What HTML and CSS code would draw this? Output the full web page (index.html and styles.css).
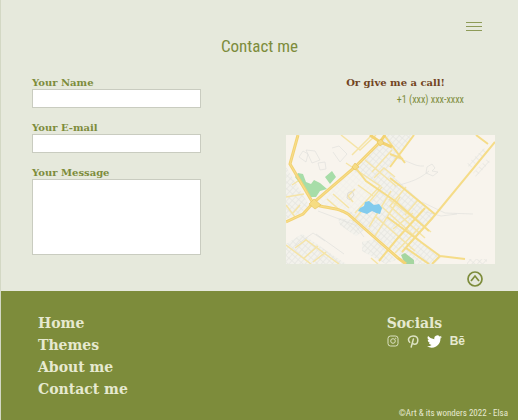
FILE: index.html
```html
<!DOCTYPE html>
<html lang="en">
<head>
<meta charset="utf-8">
<meta name="viewport" content="width=device-width, initial-scale=1">
<title>Contact me</title>
<link rel="stylesheet" href="styles.css">
</head>
<body>
<header class="top">
  <button class="menu" type="button" aria-label="Menu">
    <svg width="16" height="10" viewBox="0 0 16 10"><path d="M0 .5h16M0 4.5h16M0 8.5h16"/></svg>
  </button>
  <h1>Contact me</h1>
</header>
<main>
  <div class="columns">
    <form class="form">
      <div class="field"><label for="name">Your Name</label><input id="name" type="text"></div>
      <div class="field"><label for="email">Your E-mail</label><input id="email" type="email"></div>
      <div class="field"><label for="message">Your Message</label><textarea id="message"></textarea></div>
    </form>
    <section class="call">
      <h2>Or give me a call!</h2>
      <p class="phone">+1 (xxx) xxx-xxxx</p>
      <svg class="map" viewBox="0 0 209 129" role="img" aria-label="Map">
        <defs>
          <pattern id="blocks" width="5" height="4" patternUnits="userSpaceOnUse" patternTransform="rotate(-48)">
            <path d="M0 .5H5M.5 0V4" stroke="#e3e3de" stroke-width=".6"/>
          </pattern>
        </defs>
        <rect width="209" height="129" fill="#f8f4ed"/>
        <g fill="#f3f2ec">
          <path d="M0 32 23 70 15 78 0 84ZM69 32 94 7 101 0H128L100 35 121 54 150 80 114 121 80 93 58 77 34 70 32 66Z"/>
          <path d="M0 109 16 99 60 129H0ZM76 107 89 104 110 125 100 129 76 116ZM52 83 67 85 78 95 70 101 54 90ZM117 108 130 104 156 121 148 129H115Z"/>
        </g>
        <g fill="url(#blocks)">
          <path d="M0 32 23 70 15 78 0 84ZM69 32 94 7 101 0H128L100 35 121 54 150 80 114 121 80 93 58 77 34 70 32 66Z"/>
          <path d="M0 109 16 99 60 129H0ZM76 107 89 104 110 125 100 129 76 116ZM52 83 67 85 78 95 70 101 54 90ZM117 108 130 104 156 121 148 129H115ZM181 29 198 13 201 17 184 34ZM187 38 202 23 204 27 190 42ZM181 124H201V129H181Z"/>
        </g>
        <path d="M29 65 65 35 94 51 75 79 57 75 35 69Z" fill="#f8f4ed" opacity=".65"/>
        <g fill="none" stroke="#dddeda" stroke-width=".6">
          <path d="m13 22 4-6 5 3-2 8zM20 15l9 1 5 9-8 3zM32 28l7-1 1 7-6 1zM47 17l7 10 7-8-8-8-7 2"/>
          <path d="M108 23C123 25 128 32 138 31M143 36C130 47 121 47 108 52M141 32l5-3 3 4-3 3 6 1-5 4-7-3zM136 67l23 11 28 1M140 77l15 4 16-2M9 111l18-13 12 8M30 99l28 20M32 76l37 14 9 12"/>
        </g>
        <g fill="none" stroke="#f5e4a7" stroke-width="1.5">
          <path d="M55 0 74 15 90 0M66 20 86 0M60 28 94 51 69 78M47 59 63 73M41 64 56 77M79 25 110 51M86 37 106 15M72 50 87 61M69 54 62 61 67 67M96 52 67 86M105 56 83 92M114 62 89 101M120 52 104 71 139 103M103 64 145 97M95 71 134 106M90 82 129 116M107 94 127 78M123 109 147 83M109 118 133 93M132 65 119 80M6 50 15 44M0 62 18 59M7 78 14 70M0 70 9 82M0 110 25 129M9 113 20 105 53 129M18 123 32 111M27 127 40 117M85 123 92 129M88 43 98 33 109 42"/>
        </g>
        <g fill="none" stroke="#f5dc88" stroke-width="2">
          <path d="M128 0 104 32M104 19 117 24M98 0 119 28M190 0 202 9M104 43 117 53 150 80M209 7 149 80 116 117M69 32 80 46 109 66 143 96M101 82 154 121 179 124M154 121 146 129M93 126 111 104 139 73M120 113 143 129"/>
        </g>
        <path d="m9 42 3-4 5 1 3 8 5 2 3-4 6 3 7 6-7 2-4 6H24ZM39 42l7-6 4 6-6 7z" fill="#a7dda8"/>
        <path d="m72 76 2-3 4-2 1-4 4-1 5 4 5-1 3 4-2 6-4-1-4-2-5 3z" fill="#82cbed"/>
        <path d="m115 120 4-2 9 7v4h-9z" fill="#a5d6a0"/>
        <g fill="none" stroke="#f3d373" stroke-width="3">
          <path d="M12 0 4 29 27 68 34 71C49 74 54 74 62 79L79 94 112 123 120 129M0 87 17 79 27 68 69 32 94 7 99 0M84 0 94 7 106 12"/>
        </g>
        <path d="M12 0 4 29 27 68 34 71C49 74 54 74 62 79L79 94 112 123M0 87 17 79 27 68 69 32 94 7" fill="none" stroke="#f9e29a" stroke-width=".7"/>
        <path d="m23 69 5-5 7 6-6 4zM66 32l3-4 4 4-4 3zM91 7l4-3 3 4-4 3z" fill="#f6dc82" stroke="#e8c565" stroke-width=".7"/>
        <path d="m61 63 1-5 4-2 2 4-4 5z" fill="none" stroke="#dedbd1"/>
      </svg>
    </section>
  </div>
  <a class="to-top" href="#" aria-label="Back to top">
    <svg width="16" height="16" viewBox="0 0 16 16"><circle cx="8" cy="8" r="7"/><path d="m4 10 4-5 4 5"/></svg>
  </a>
</main>
<footer>
  <div class="footer-row">
    <nav>
      <a href="#">Home</a>
      <a href="#">Themes</a>
      <a href="#">About me</a>
      <a href="#">Contact me</a>
    </nav>
    <section class="socials">
      <h2>Socials</h2>
      <div class="icons">
        <a href="#" aria-label="Instagram"><svg width="12" height="12" viewBox="0 0 12 12" fill="none" stroke="#dce2c2"><rect x="1" y="1" width="10" height="10" rx="2.5"/><circle cx="6" cy="6" r="2.3"/><circle cx="8.8" cy="3.2" r=".3"/></svg></a>
        <a href="#" aria-label="Pinterest"><svg width="12" height="13" viewBox="0 0 12 13" fill="none" stroke="#dce2c2" stroke-width="1.5" stroke-linecap="round"><path d="M2.7 7.2C.2 4.8 2 1 6 1c3 0 4.8 1.8 4.8 4 0 2.6-1.5 4.3-3.3 4.3-1.2 0-1.8-.6-2-1.2M6.4 4 4.2 12"/></svg></a>
        <a href="#" aria-label="Twitter"><svg width="15" height="13" viewBox="0 2 24 20" fill="#fff"><path d="M24 4.6a10 10 0 0 1-2.8.8 5 5 0 0 0 2.1-2.7 10 10 0 0 1-3.1 1.2 4.9 4.9 0 0 0-8.4 4.5A14 14 0 0 1 1.7 3.2a4.9 4.9 0 0 0 1.5 6.5 5 5 0 0 1-2.2-.6 4.9 4.9 0 0 0 4 4.9 5 5 0 0 1-2.3.1 4.9 4.9 0 0 0 4.6 3.4A10 10 0 0 1 0 19.5 14 14 0 0 0 21.5 7.1 10 10 0 0 0 24 4.6z"/></svg></a>
        <a class="behance" href="#" aria-label="Behance">Bē</a>
      </div>
    </section>
  </div>
  <p class="copyright">©Art &amp; its wonders 2022 - Elsa</p>
</footer>
</body>
</html>
```
FILE: styles.css
```css
* {
  box-sizing: border-box;
}

body {
  margin: 0;
  min-height: 100vh;
  display: flex;
  flex-direction: column;
  border-left: 1px solid #d3d8c4;
  background: #e6e9dc;
  color: #7d8c3b;
  font-family: "DejaVu Serif", serif;
}

h1, h2, p {
  margin: 0;
}

a {
  color: inherit;
  text-decoration: none;
}

svg {
  display: block;
}

.top {
  display: flex;
  flex-direction: column;
  padding: 22px 36px 0;
}

.menu {
  align-self: flex-end;
  padding: 0;
  border: 0;
  background: none;
}

.menu path {
  stroke: #8e9b58;
}

h1 {
  font: 17px/28px "Roboto Condensed", Roboto, sans-serif;
  text-align: center;
}

main {
  display: flex;
  flex-direction: column;
  padding: 17px 23px 4px 31px;
}

.columns {
  display: grid;
  grid-template-columns: 169fr 209fr;
  gap: 85px;
}

.form {
  display: flex;
  flex-direction: column;
  gap: 14px;
}

.field {
  display: flex;
  flex-direction: column;
}

label,
.call h2 {
  font-size: 10px;
  font-weight: bold;
  line-height: 12px;
}

input,
textarea {
  width: 100%;
  height: 19px;
  padding: 2px 4px;
  border: 1px solid #c9ccc0;
  border-radius: 0;
  background: #fff;
  font: 10px "Liberation Sans", sans-serif;
}

textarea {
  height: 76px;
  resize: none;
}

.call {
  display: flex;
  flex-direction: column;
}

.call h2 {
  padding-right: 50px;
  color: #73451f;
  text-align: right;
}

.phone {
  padding: 3px 31px 0 0;
  font: 10px/16px "Roboto Condensed", Roboto, sans-serif;
  text-align: right;
}

.map {
  width: 100%;
  margin-top: 27px;
}

.to-top {
  align-self: flex-end;
  margin: 7px 12px 0 0;
}

.to-top svg {
  fill: none;
  stroke: #7d8c3b;
  stroke-width: 1.7;
}

footer {
  flex: 1;
  display: flex;
  flex-direction: column;
  justify-content: space-between;
  padding: 21px 10px 0 37px;
  background: #7d8c3b;
  color: #e6e9d0;
}

.footer-row {
  display: flex;
  justify-content: space-between;
}

nav {
  display: flex;
  flex-direction: column;
  font-size: 14px;
  font-weight: bold;
  line-height: 22px;
}

.socials {
  padding-right: 43px;
}

.socials h2 {
  font-size: 14px;
  line-height: 22px;
}

.icons {
  display: flex;
  align-items: center;
  gap: 8px;
  height: 14px;
}

.behance {
  font: bold 12px/14px "Liberation Sans", sans-serif;
}

.copyright {
  font: 9px/14px "Roboto Condensed", Roboto, sans-serif;
  text-align: right;
}
```
